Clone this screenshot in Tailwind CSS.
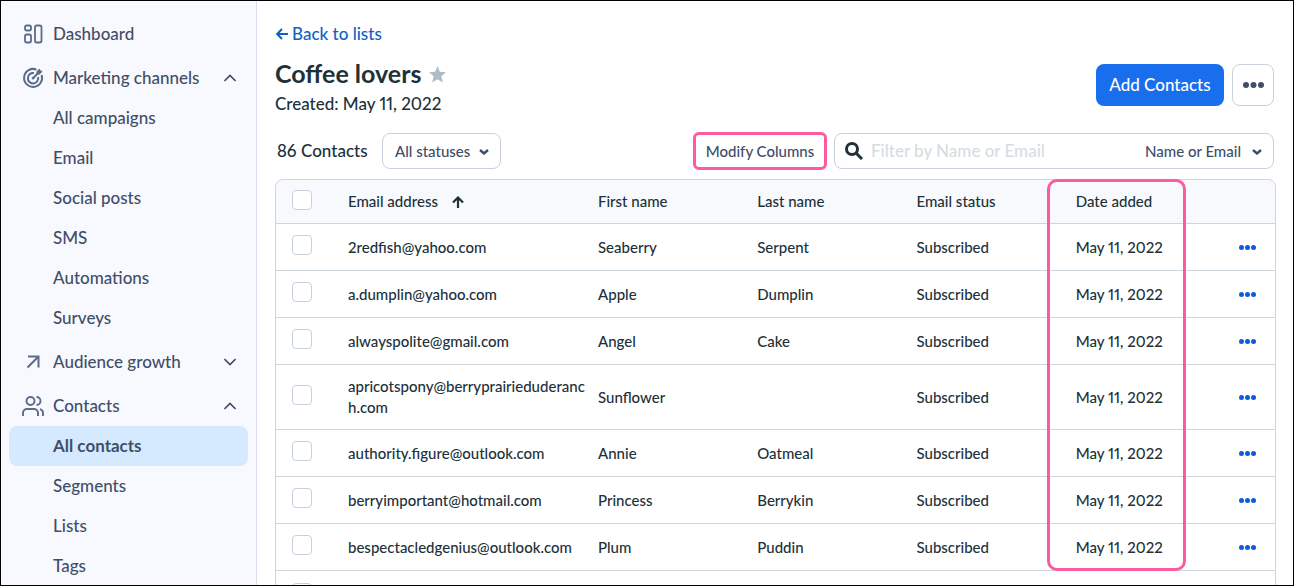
<!DOCTYPE html>
<html lang="en">
<head>
  <meta charset="UTF-8">
  <meta name="viewport" content="width=device-width,initial-scale=1">
  <title>Coffee lovers - Contacts</title>
  <script src="https://cdn.jsdelivr.net/npm/@tailwindcss/browser@4"></script>
</head>
<body class="flex h-screen overflow-hidden border border-black bg-white font-['Lato',sans-serif] font-medium text-[#21313a]">

  <!-- Sidebar -->
  <nav aria-label="Main" class="flex w-64 shrink-0 flex-col gap-1 overflow-hidden border-r border-[#d9deeb] bg-[#f8f9fe] px-2 pt-[13px] text-[17px] text-[#414e68]">
    <a href="#" class="flex h-10 shrink-0 items-center gap-2 px-3">
      <svg class="size-6 text-[#5c6b8a]" viewBox="0 0 24 24" fill="none" stroke="currentColor" stroke-width="1.800">
        <rect x="4" y="3.500" width="6" height="5" rx="1.700"/><rect x="4" y="12.500" width="6" height="8" rx="1.700"/><rect x="14" y="3.500" width="6.500" height="17" rx="1.700"/>
      </svg>
      Dashboard
    </a>

    <div class="shrink-0">
      <button aria-expanded="true" class="flex h-10 w-full items-center gap-2 px-3">
        <svg class="size-6 text-[#5c6b8a]" viewBox="0 0 24 24" fill="none" stroke="currentColor" stroke-width="2">
          <path d="M15.500 3.600A9 9 0 1 0 20.600 9"/><path d="M13 7.100A5.200 5.200 0 1 0 17.100 11"/><path d="M12 12.300l5-5"/><circle cx="12" cy="12.300" r="1.200" fill="currentColor" stroke="none"/><path d="M16 8V5.500L18.500 3l.6 1.900 2 .6L18.500 8z" fill="currentColor" stroke-width="1"/>
        </svg>
        <span class="flex-1 text-left">Marketing channels</span>
        <svg class="size-3" viewBox="0 0 12 12" fill="none" stroke="currentColor" stroke-width="1.6"><path d="M.5 9L6 3.500 11.500 9"/></svg>
      </button>
      <a href="#" class="flex h-10 items-center pl-11">All campaigns</a>
      <a href="#" class="flex h-10 items-center pl-11">Email</a>
      <a href="#" class="flex h-10 items-center pl-11">Social posts</a>
      <a href="#" class="flex h-10 items-center pl-11">SMS</a>
      <a href="#" class="flex h-10 items-center pl-11">Automations</a>
      <a href="#" class="flex h-10 items-center pl-11">Surveys</a>
    </div>

    <button aria-expanded="false" class="flex h-10 w-full shrink-0 items-center gap-2 px-3">
      <svg class="size-6 text-[#5c6b8a]" viewBox="0 0 24 24" fill="none" stroke="currentColor" stroke-width="2"><path d="M6.500 17.500L17 7M7 6.500H17.500V17.500"/></svg>
      <span class="flex-1 text-left">Audience growth</span>
      <svg class="size-3" viewBox="0 0 12 12" fill="none" stroke="currentColor" stroke-width="1.6"><path d="M.5 3L6 8.500 11.500 3"/></svg>
    </button>

    <div class="shrink-0">
      <button aria-expanded="true" class="flex h-10 w-full items-center gap-2 px-3">
        <svg class="size-6 text-[#5c6b8a]" viewBox="0 0 24 24" fill="none" stroke="currentColor" stroke-width="1.900"><circle cx="9.500" cy="7" r="4"/><path d="M2 22v-3a4 4 0 0 1 4-4h7a4 4 0 0 1 4 4v3M15.500 3a4 4 0 0 1 0 8M19 15.200a4 4 0 0 1 3 3.800v3"/></svg>
        <span class="flex-1 text-left">Contacts</span>
        <svg class="size-3" viewBox="0 0 12 12" fill="none" stroke="currentColor" stroke-width="1.6"><path d="M.5 9L6 3.500 11.500 9"/></svg>
      </button>
      <a href="#" aria-current="page" class="flex h-10 items-center rounded-lg bg-[#d5eaff] pl-11 font-bold">All contacts</a>
      <a href="#" class="flex h-10 items-center pl-11">Segments</a>
      <a href="#" class="flex h-10 items-center pl-11">Lists</a>
      <a href="#" class="flex h-10 items-center pl-11">Tags</a>
    </div>
  </nav>

  <main class="min-w-0 flex-1 pt-[21px] pr-[17px] pl-[18px]">
    <header class="flex items-end justify-between pr-0.5">
      <div>
        <a href="#" class="flex h-6 items-center gap-1 pl-px text-[17px] text-[#0f62c4]">
          <svg class="size-3" viewBox="0 0 12 12" fill="none" stroke="currentColor" stroke-width="2"><path d="M12 6H1.500M6 1L1.200 6 6 11"/></svg>
          Back to lists
        </a>
        <h1 class="mt-3 flex h-8 items-center gap-2 text-[25px] font-bold">
          Coffee lovers
          <button aria-label="Favorite" class="text-[#adbcc5]">
            <svg class="size-[17px]" viewBox="0 0 16 16" fill="currentColor"><path d="M8 0l2.200 5.400 5.800.5-4.400 3.800L13 15.500 8 12.400 3 15.500l1.400-5.800L0 5.900l5.800-.5z"/></svg>
          </button>
        </h1>
        <p class="mt-0.5 text-[17px]/6 proportional-nums">Created: May 11, 2022</p>
      </div>
      <div class="mb-2.5 flex gap-2">
        <button class="h-[42px] w-32 rounded-lg bg-[#186eed] text-[17px] text-white">Add Contacts</button>
        <button aria-label="More actions" class="flex size-[42px] items-center justify-center rounded-lg border border-[#c8d0e0] text-[#414e68]">
          <svg class="h-1.5 w-[21px]" viewBox="0 0 21 6" fill="currentColor"><circle cx="3" cy="3" r="3"/><circle cx="10.500" cy="3" r="3"/><circle cx="18" cy="3" r="3"/></svg>
        </button>
      </div>
    </header>

    <div class="mt-4 flex h-[38px] items-center pr-0.5">
      <p class="w-[107px] pl-0.5 text-[17px] whitespace-nowrap">86 Contacts</p>
      <div class="relative text-[#414e68]">
        <select aria-label="Status" class="h-9 w-[119px] appearance-none rounded-lg border border-[#c8d0e0] bg-white pl-3 text-[15px]">
          <option>All statuses</option>
        </select>
        <svg class="pointer-events-none absolute top-4 right-3 h-1.5 w-2.5" viewBox="0 0 10 6" fill="none" stroke="currentColor" stroke-width="2.400"><path d="M1 1l4 3.500L9 1"/></svg>
      </div>
      <button class="ml-auto h-[38px] w-[134px] rounded-md border-3 border-[#fc5ba0] text-[15px] text-[#414e68]">Modify Columns</button>
      <div class="ml-[7px] flex h-9 w-[440px] items-center rounded-lg border border-[#c8d0e0]">
        <svg class="ml-2.5 size-[18px] shrink-0" viewBox="0 0 18 18" fill="none" stroke="currentColor" stroke-width="3"><circle cx="7" cy="7" r="5.500"/><path d="M11 11l6 6"/></svg>
        <input type="text" aria-label="Filter by Name or Email" placeholder="Filter by Name or Email" class="min-w-0 flex-1 pl-2 text-[17px] outline-none placeholder:text-[#d5dde1]">
        <div class="relative text-[#414e68]">
          <select aria-label="Filter field" class="h-8 w-[128px] appearance-none bg-transparent text-[15px]">
            <option>Name or Email</option>
          </select>
          <svg class="pointer-events-none absolute top-3.5 right-[11px] h-1.5 w-2.5" viewBox="0 0 10 6" fill="none" stroke="currentColor" stroke-width="2.400"><path d="M1 1l4 3.500L9 1"/></svg>
        </div>
      </div>
    </div>

    <div class="mt-[9px] rounded-lg border border-[#ccd6dc]">
      <table class="w-full table-fixed border-separate border-spacing-0 text-left text-[15px]/[21px] proportional-nums">
        <thead>
          <tr class="h-11 *:border-b *:border-[#ccd6dc] *:bg-[#f8f9fd] *:px-4 *:font-medium">
            <th class="w-14 rounded-tl-lg pb-1"><input type="checkbox" aria-label="Select all contacts" class="block size-5 appearance-none rounded border border-[#c8d0e0] bg-white"></th>
            <th class="w-[250px]">
              <button class="flex items-center gap-3.5">
                Email address
                <svg class="size-3" viewBox="0 0 12 12" fill="none" stroke="currentColor" stroke-width="2.200"><path d="M6 12V1.500M1 6.500L6 1.500l5 5"/></svg>
              </button>
            </th>
            <th>First name</th>
            <th>Last name</th>
            <th>Email status</th>
            <th class="relative">
              Date added
              <!-- highlight around the column -->
              <span class="pointer-events-none absolute top-[-1px] left-[-13px] z-10 h-[392px] w-[139px] rounded-[10px] border-3 border-[#fc5ba0]"></span>
            </th>
            <th class="w-14 rounded-tr-lg"></th>
          </tr>
        </thead>
        <tbody id="contacts"></tbody>
      </table>
    </div>
  </main>

  <script>
    const contacts = [
      ["2redfish@yahoo.com", "Seaberry", "Serpent"],
      ["a.dumplin@yahoo.com", "Apple", "Dumplin"],
      ["alwayspolite@gmail.com", "Angel", "Cake"],
      ["apricotspony@berryprairieduderanc<wbr>h.com", "Sunflower", ""],
      ["authority.figure@outlook.com", "Annie", "Oatmeal"],
      ["berryimportant@hotmail.com", "Princess", "Berrykin"],
      ["bespectacledgenius@outlook.com", "Plum", "Puddin"]
    ];
    const rows = contacts.map(([email, first, last]) => `
      <tr class="h-[47px] *:border-b *:border-[#ccd6dc] *:py-[11px] *:pl-4">
        <td><input type="checkbox" aria-label="Select ${first}" class="mb-1 block size-5 appearance-none rounded border border-[#c8d0e0] bg-white"></td>
        <td>${email}</td>
        <td>${first}</td>
        <td>${last}</td>
        <td>Subscribed</td>
        <td>May 11, 2022</td>
        <td>
          <button aria-label="Actions for ${first}" class="ml-1 flex h-5 items-center text-[#0b5cdf]">
            <svg class="h-[5px] w-[17px]" viewBox="0 0 17 5" fill="currentColor"><circle cx="2.500" cy="2.500" r="2.500"/><circle cx="8.500" cy="2.500" r="2.500"/><circle cx="14.500" cy="2.500" r="2.500"/></svg>
          </button>
        </td>
      </tr>`);
    rows.push(`
      <tr class="h-[47px]">
        <td class="py-[11px] pl-4"><input type="checkbox" aria-label="Select" class="mb-1 block size-5 appearance-none rounded border border-[#c8d0e0] bg-white"></td>
        <td colspan="6"></td>
      </tr>`);
    document.getElementById("contacts").innerHTML = rows.join("");
  </script>
</body>
</html>
